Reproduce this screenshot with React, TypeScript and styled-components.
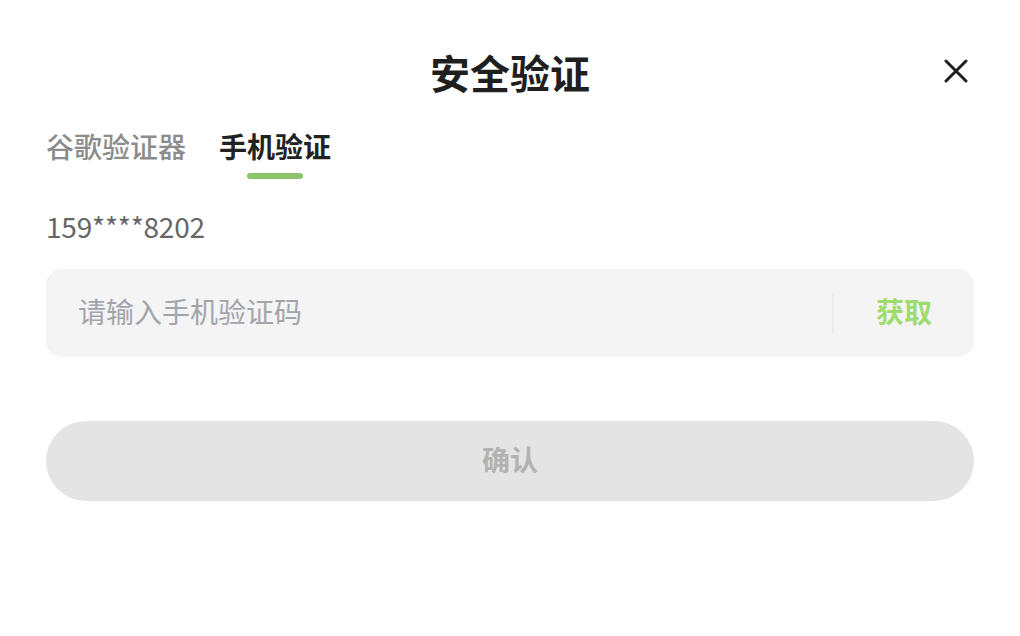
import { FC, useState } from "react";

import styled, { createGlobalStyle } from "styled-components";

const GlobalStyle = createGlobalStyle`
  html, body {
    margin: 0;
    padding: 0;
    background: #ffffff;
  }
  body {
    font-family: "Noto Sans CJK SC", "Noto Sans", sans-serif;
  }
`;

const Panel = styled.div`
  width: 1020px;
  height: 636px;
  box-sizing: border-box;
  padding: 47px 46px 0;
  display: flex;
  flex-direction: column;
`;

const Header = styled.div`
  display: grid;
  grid-template-columns: 1fr auto 1fr;
  align-items: center;
  height: 50px;
`;

const Title = styled.h1`
  grid-column: 2;
  margin: 0;
  margin-top: -1px;
  font-size: 40px;
  line-height: 50px;
  font-weight: 700;
  color: #1f1f1f;
`;

const CloseButton = styled.button`
  grid-column: 3;
  justify-self: end;
  margin-right: 6px;
  margin-top: -2px;
  width: 24px;
  height: 24px;
  padding: 0;
  border: none;
  background: none;
  cursor: pointer;
  display: flex;
`;

const Tabs = styled.div`
  display: flex;
  gap: 33px;
  margin-top: 31px;
`;

const Tab = styled.div<{ $active?: boolean }>`
  display: flex;
  flex-direction: column;
  align-items: center;
  cursor: pointer;
  font-size: 28px;
  line-height: 36px;
  font-weight: ${(p) => (p.$active ? 700 : 500)};
  color: ${(p) => (p.$active ? "#222222" : "#8c8c8c")};

  &::after {
    content: "";
    display: block;
    width: 56px;
    height: 6px;
    margin-top: 9px;
    border-radius: 3px;
    background: ${(p) => (p.$active ? "#8bc46a" : "transparent")};
  }
`;

const Phone = styled.div`
  margin-top: 29px;
  font-size: 28px;
  line-height: 36px;
  letter-spacing: -0.2px;
  color: #666666;
`;

const InputRow = styled.div`
  margin-top: 25px;
  height: 88px;
  box-sizing: border-box;
  border-radius: 16px;
  background: #f4f4f4;
  display: flex;
  align-items: center;
  padding: 0 42px 4px 32px;
`;

const CodeInput = styled.input`
  flex: 1;
  min-width: 0;
  border: none;
  outline: none;
  background: transparent;
  padding: 0;
  font-family: inherit;
  font-size: 28px;
  color: #1f1f1f;

  &::placeholder {
    color: #a2a4ab;
  }
`;

const Divider = styled.div`
  width: 2px;
  height: 40px;
  margin-top: 4px;
  background: #ebebeb;
  margin-right: 42px;
`;

const GetCode = styled.button`
  border: none;
  background: none;
  padding: 0;
  font-family: inherit;
  font-size: 28px;
  font-weight: 700;
  color: #9edc6e;
  cursor: pointer;
`;

const Confirm = styled.button`
  margin-top: 64px;
  height: 80px;
  padding: 0 0 4px;
  border: none;
  border-radius: 40px;
  background: #e4e4e4;
  font-family: inherit;
  font-size: 28px;
  font-weight: 700;
  color: #b2b2b2;
  cursor: not-allowed;
`;

const tabs = ["谷歌验证器", "手机验证"];

const App: FC = () => {
  const [active, setActive] = useState(1);
  const [code, setCode] = useState("");

  return (
    <>
      <GlobalStyle />
      <Panel>
        <Header>
          <Title>安全验证</Title>
          <CloseButton aria-label="关闭">
            <svg width="24" height="24" viewBox="0 0 24 24">
              <path
                d="M2 2L22 22M22 2L2 22"
                stroke="#1f1f1f"
                strokeWidth="3"
                strokeLinecap="round"
              />
            </svg>
          </CloseButton>
        </Header>
        <Tabs>
          {tabs.map((t, i) => (
            <Tab key={t} $active={i === active} onClick={() => setActive(i)}>
              {t}
            </Tab>
          ))}
        </Tabs>
        <Phone>159****8202</Phone>
        <InputRow>
          <CodeInput
            placeholder="请输入手机验证码"
            value={code}
            onChange={(e) => setCode(e.target.value)}
          />
          <Divider />
          <GetCode>获取</GetCode>
        </InputRow>
        <Confirm disabled={!code}>确认</Confirm>
      </Panel>
    </>
  );
};

export default App;
